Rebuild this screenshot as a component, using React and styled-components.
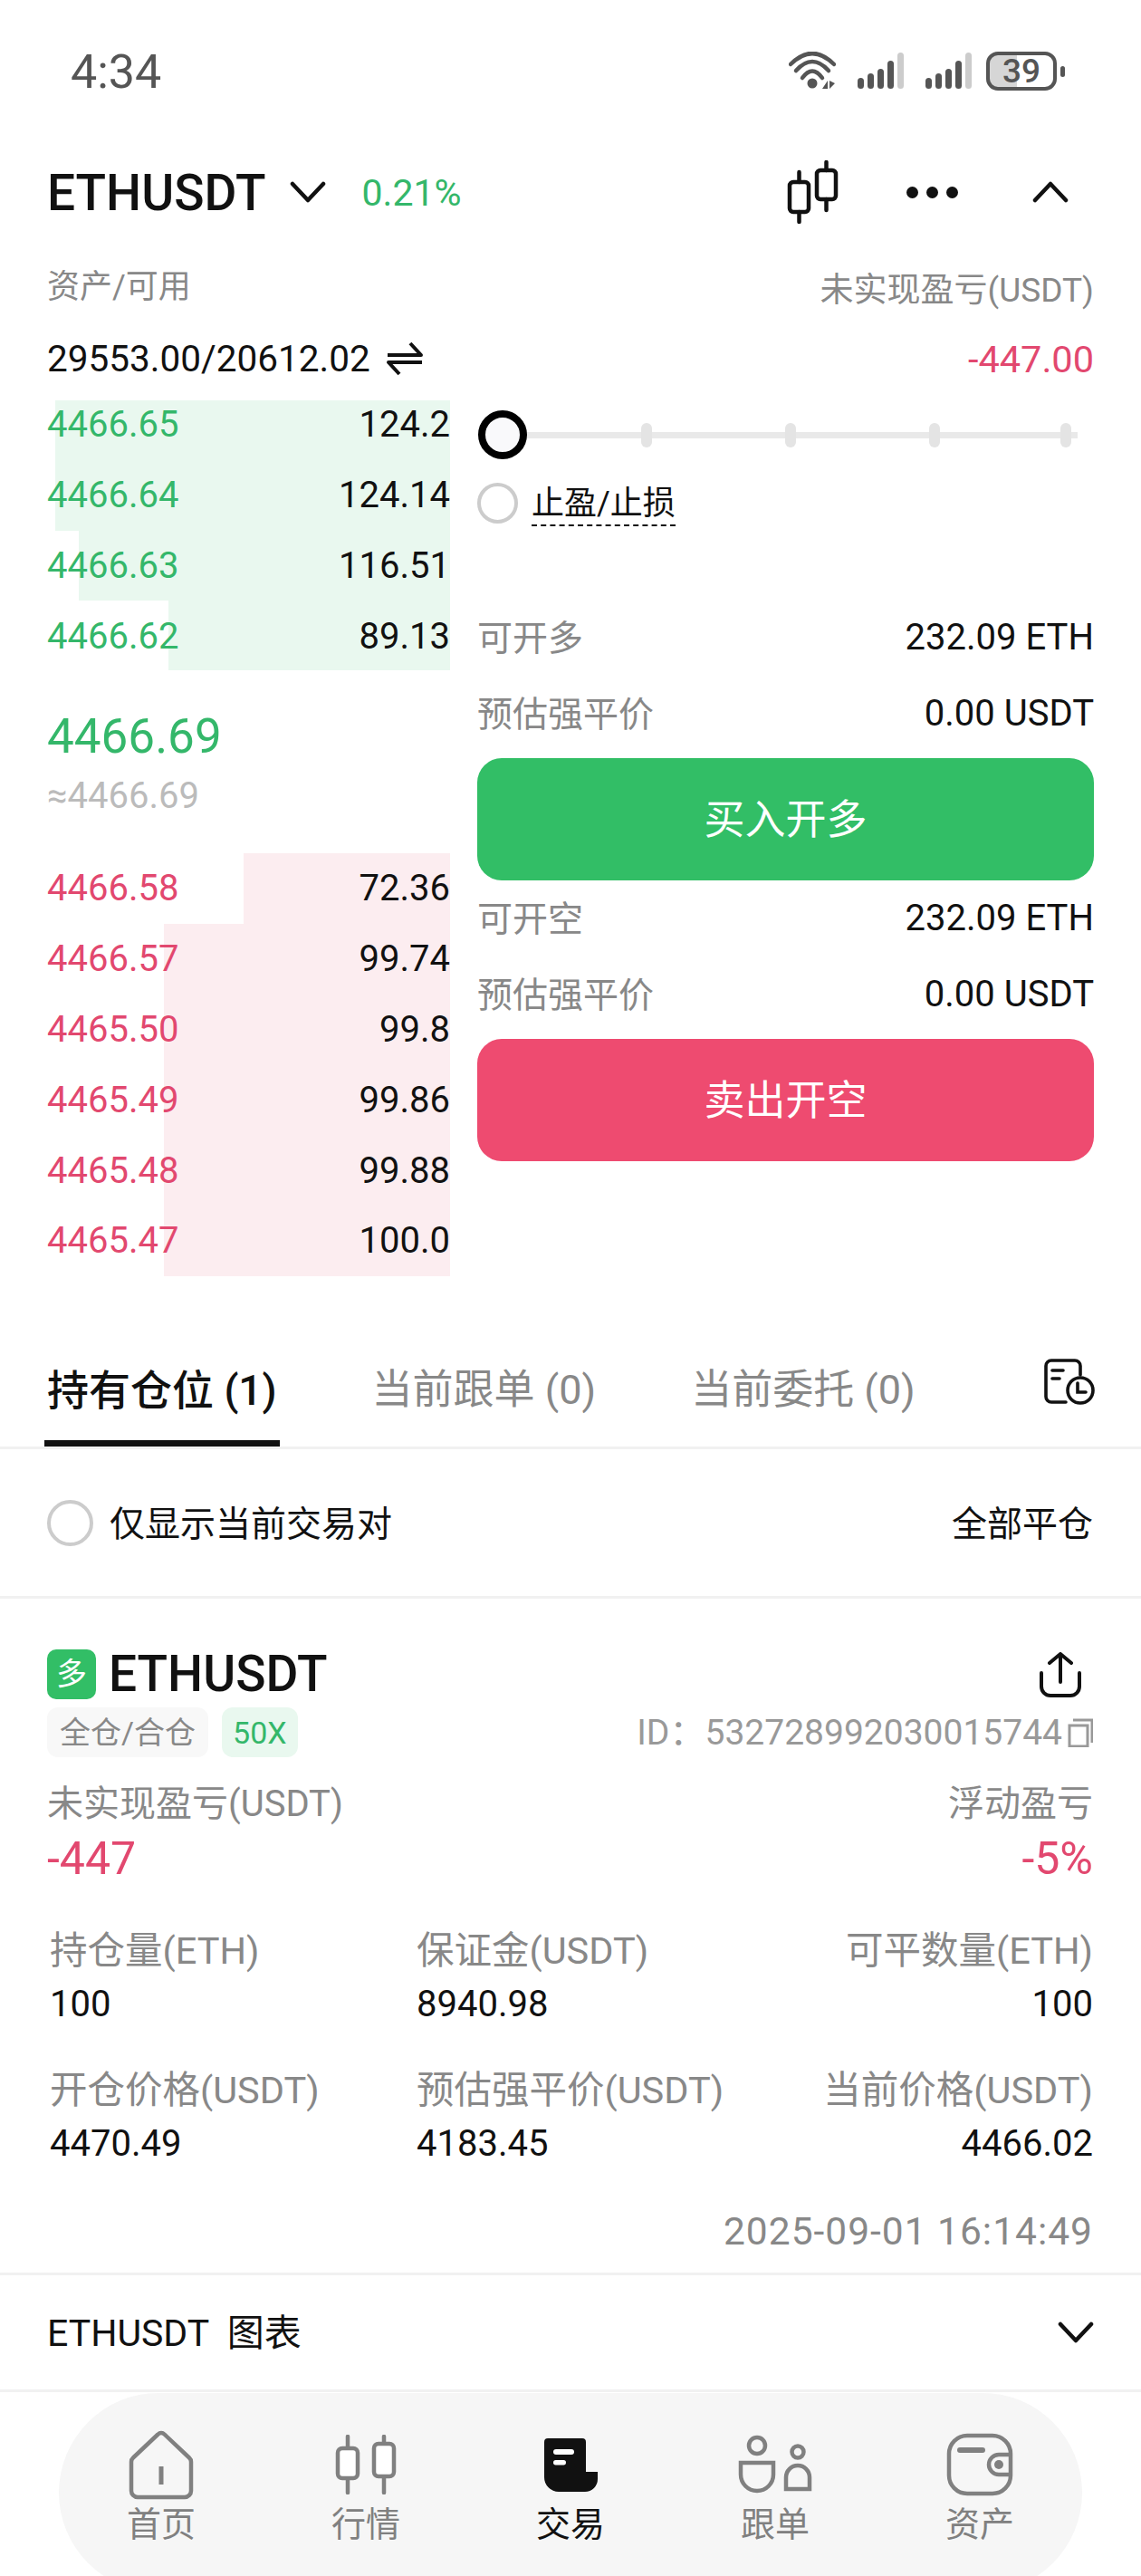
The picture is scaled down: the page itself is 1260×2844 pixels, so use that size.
import styled, { createGlobalStyle } from 'styled-components';

const GREEN = '#34b76a';
const RED = '#e2486f';
const GREY = '#888';
const INK = '#111';
const LINE = '#f1f1f1';
const FONT = `Roboto, "Noto Sans CJK SC", sans-serif`;

const GlobalStyle = createGlobalStyle`
    html, body {
        margin: 0;
        padding: 0;
        background: #fff;
    }
    * {
        box-sizing: border-box;
    }
`;

const Page = styled.div`
    width: 1260px;
    height: 2844px;
    overflow: hidden;
    background: #fff;
    font-family: ${FONT};
    font-size: 40px;
    color: ${INK};
`;

const StatusBar = styled.div`
    height: 156px;
    padding: 0 84px 0 78px;
    display: flex;
    align-items: center;
    justify-content: space-between;
    color: #555;
`;

const Clock = styled.div`
    padding-top: 2px;
    font-size: 52px;
`;

const StatusIcons = styled.div`
    display: flex;
    align-items: center;
    width: 305px;
`;

const Signal = styled.svg`
    margin-left: ${(props) => props.$left}px;
    flex: none;
`;

const Battery = styled.div`
    position: relative;
    margin-left: 16px;
    width: 78px;
    height: 43px;
    border: 4px solid #555;
    border-radius: 13px;
    background: linear-gradient(90deg, #d6d6d6 43%, transparent 43%);
    font-size: 37px;
    font-weight: 500;
    line-height: 35px;
    text-align: center;
    color: #555;

    &::after {
        content: "";
        position: absolute;
        right: -13px;
        top: 12px;
        width: 5px;
        height: 12px;
        border-radius: 3px;
        background: #555;
    }
`;

const Header = styled.div`
    height: 112px;
    padding: 0 52px;
    display: flex;
    align-items: center;
`;

const Pair = styled.div`
    padding-top: 2px;
    font-size: 55px;
    font-weight: 500;
`;

const Percent = styled.div`
    margin-left: 40px;
    padding-top: 2px;
    font-size: 41px;
    color: ${GREEN};
`;

const HeaderTools = styled.div`
    margin-left: auto;
    display: flex;
    align-items: center;
`;

const Dots = styled.div`
    margin-left: 75px;
    display: flex;
    gap: 9px;
    span {
        width: 13px;
        height: 13px;
        border-radius: 50%;
        background: ${INK};
    }
`;

const AssetLabels = styled.div`
    height: 92px;
    margin-top: -1px;
    padding: 0 52px;
    display: flex;
    align-items: center;
    justify-content: space-between;
    font-size: 36px;
    color: ${GREY};
`;

const AssetRight = styled.span`
    padding-top: 8px;
    font-size: 37px;
`;

const AssetValues = styled.div`
    height: 74px;
    margin-bottom: 9px;
    padding: 0 52px;
    display: flex;
    align-items: center;
    justify-content: space-between;
`;

const Balance = styled.div`
    display: flex;
    align-items: center;
    gap: 18px;
    font-size: 40.5px;
`;

const Red = styled.span`
    font-size: 41.5px;
    color: ${RED};
`;

const Trade = styled.div`
    height: 965px;
    padding: 0 52px;
    display: flex;
    gap: 30px;
`;

const BookColumn = styled.div`
    width: 445px;
`;

const BookClip = styled.div`
    height: 298px;
    overflow: hidden;
`;

const BookList = styled.div`
    margin-top: ${(props) => props.$shift || 0}px;
`;

const BookRow = styled.div`
    position: relative;
    height: 77.8px;
    display: flex;
    align-items: center;
    justify-content: space-between;
`;

const BookBar = styled.div`
    position: absolute;
    right: 0;
    top: 0;
    bottom: 0;
    background: ${(props) => (props.$side === 'buy' ? '#e9f8ef' : '#fcedf0')};
`;

const BookPrice = styled.span`
    position: relative;
    color: ${(props) => (props.$side === 'buy' ? GREEN : RED)};
`;

const BookSize = styled.span`
    position: relative;
`;

const PriceBox = styled.div`
    height: 202px;
    padding-top: 37px;
`;

const LastPrice = styled.div`
    font-size: 53px;
    line-height: 72px;
    color: ${GREEN};
`;

const IndexPrice = styled.div`
    line-height: 60px;
    color: #bbb;
`;

const OrderColumn = styled.div`
    width: 681px;
`;

const Slider = styled.div`
    position: relative;
    margin-top: 11px;
    height: 54px;
    display: flex;
    align-items: center;

    &::before {
        content: "";
        position: absolute;
        left: 30px;
        width: 633px;
        top: 24px;
        height: 7px;
        background: #e9e9e9;
    }
`;

const Thumb = styled.div`
    position: relative;
    flex: none;
    width: 54px;
    height: 54px;
    margin-left: 1px;
    margin-right: 126px;
    border: 8px solid #000;
    border-radius: 50%;
    background: #f9f9fb;
`;

const Tick = styled.div`
    position: relative;
    flex: none;
    width: 12px;
    height: 27px;
    margin-right: 147px;
    border-radius: 6px;
    background: #e4e4e4;

    &:last-child {
        margin-left: -14px;
        margin-right: 0;
    }
`;

const StopRow = styled.div`
    margin-top: 25px;
    height: 46px;
    display: flex;
    align-items: center;
    gap: 15px;
`;

const Radio = styled.div`
    width: ${(props) => props.$size}px;
    height: ${(props) => props.$size}px;
    border: 4px solid #ccc;
    border-radius: 50%;
    flex: none;
`;

const StopLabel = styled.span`
    margin-top: 3px;
    font-size: 36px;
    line-height: 46px;
    border-bottom: 2px dashed ${INK};
`;

const InfoRow = styled.div`
    height: 84px;
    display: flex;
    align-items: center;
    justify-content: space-between;
    margin-top: ${(props) => props.$top || 0}px;
`;

const InfoLabel = styled.span`
    margin-bottom: 4px;
    font-size: 39px;
    color: ${GREY};
`;

const ActionButton = styled.button`
    display: block;
    width: 100%;
    height: 135px;
    margin-top: ${(props) => props.$top}px;
    padding: 0 0 6px;
    border: none;
    border-radius: 27px;
    background: ${(props) => (props.$side === 'buy' ? '#32be66' : '#ee4b70')};
    color: #fff;
    font-family: ${FONT};
    font-size: 45px;
`;

const TabsBar = styled.div`
    margin-top: 80px;
    height: 113px;
    padding: 0 49px;
    display: flex;
    gap: 99px;
    border-bottom: 3px solid ${LINE};
`;

const Tab = styled.div`
    height: 110px;
    padding: 22px 3px 0;
    font-size: ${(props) => (props.$active ? 46 : 45)}px;
    line-height: 52px;
    font-weight: ${(props) => (props.$active ? 500 : 400)};
    color: ${(props) => (props.$active ? INK : GREY)};
    border-bottom: 7px solid ${(props) => (props.$active ? INK : 'transparent')};
`;

const TabIcon = styled.svg`
    margin: 13px 0 0 auto;
`;

const FilterRow = styled.div`
    height: 165px;
    padding: 0 53px 0 52px;
    display: flex;
    align-items: center;
    border-bottom: 3px solid ${LINE};
    font-size: 39px;
`;

const FilterLabel = styled.span`
    margin: 0 0 5px 18px;
`;

const CloseAll = styled.span`
    margin: 0 0 5px auto;
`;

const Card = styled.div`
    padding: 56px 53px 20px 52px;
    border-bottom: 3px solid ${LINE};
`;

const CardTitle = styled.div`
    height: 55px;
    display: flex;
    align-items: center;
`;

const SideBadge = styled.div`
    width: 54px;
    height: 55px;
    border-radius: 10px;
    background: #32be66;
    color: #fff;
    font-size: 34px;
    line-height: 55px;
    text-align: center;
`;

const CardPair = styled.div`
    margin-left: 14px;
    font-size: 55px;
    font-weight: 500;
    line-height: 53px;
`;

const ShareIcon = styled.svg`
    margin-left: auto;
    margin-right: 13px;
`;

const TagRow = styled.div`
    margin-top: 9px;
    height: 55px;
    display: flex;
    align-items: center;
    gap: 15px;
`;

const Tag = styled.div`
    height: 55px;
    padding: 2px ${(props) => (props.$green ? 12 : 14)}px 0;
    border-radius: 12px;
    font-size: 34px;
    line-height: 53px;
    background: ${(props) => (props.$green ? '#e9f8ef' : '#f8f8f8')};
    color: ${(props) => (props.$green ? GREEN : GREY)};
`;

const OrderId = styled.div`
    margin-left: auto;
    display: flex;
    align-items: center;
    gap: 6px;
    font-size: 39px;
    line-height: 50px;
    color: #999;
`;

const ProfitRow = styled.div`
    margin-top: 27px;
    display: flex;
    justify-content: space-between;
`;

const ProfitCell = styled.div`
    text-align: ${(props) => props.$align || 'left'};
`;

const CellLabel = styled.div`
    line-height: 50px;
    color: ${GREY};
`;

const ProfitValue = styled.div`
    font-size: 50px;
    line-height: 70px;
    color: ${RED};
`;

const StatGrid = styled.div`
    margin: 42px 0 0 3px;
    display: grid;
    grid-template-columns: 405px 1fr auto;
    row-gap: 36px;
`;

const StatCell = styled.div`
    text-align: ${(props) => props.$align || 'left'};
`;

const StatLabel = styled(CellLabel)`
    font-size: 41.5px;
`;

const StatValue = styled.div`
    line-height: 68px;
`;

const OpenTime = styled.div`
    margin-top: 38px;
    font-size: 42.5px;
    letter-spacing: 1px;
    line-height: 50px;
    text-align: right;
    color: ${GREY};
`;

const ChartRow = styled.div`
    height: 129px;
    padding: 0 52px;
    display: flex;
    align-items: center;
    justify-content: space-between;
    border-bottom: 3px solid ${LINE};
    white-space: pre;
`;

const ChartLabel = styled.span`
    margin-bottom: 7px;
    font-size: 41px;
`;

const BottomNav = styled.div`
    margin: 1px 0 0 65px;
    width: 1130px;
    height: 220px;
    border-radius: 110px;
    background: #f6f6f6;
    display: grid;
    grid-template-columns: repeat(5, 1fr);
`;

const NavItem = styled.div`
    height: 170px;
    padding-top: 39px;
    display: flex;
    flex-direction: column;
    align-items: center;
    font-size: 38px;
    color: ${(props) => (props.$active ? INK : '#808080')};
`;

const NavIcon = styled.div`
    height: 80px;
    display: flex;
    align-items: center;
    justify-content: center;
`;

const NavLabel = styled.div`
    padding-top: 1px;
    line-height: 50px;
`;

const Chevron = ({ up, width = 40, height = 23, color = INK, ...rest }) => (
    <svg width={width} height={height} viewBox={`0 0 ${width} ${height}`} {...rest}>
        <path
            d={up ? `M3 ${height - 3}L${width / 2} 3L${width - 3} ${height - 3}` : `M3 3L${width / 2} ${height - 3}L${width - 3} 3`}
            fill="none"
            stroke={color}
            strokeWidth="4.5"
            strokeLinecap="round"
            strokeLinejoin="round"
        />
    </svg>
);

const WifiIcon = () => (
    <svg width="52" height="42" viewBox="0 0 52 42">
        <g fill="none" stroke="#555" strokeWidth="4.5" strokeLinecap="round">
            <path d="M2 14Q26 -10 50 14" />
            <path d="M8 21Q26 1 44 21" />
            <path d="M15 29Q26 14 37 29" />
        </g>
        <circle cx="26" cy="35" r="5.5" fill="#555" />
        <path d="M43 32V41H37ZM45 32V41L51 35Z" fill="#555" />
    </svg>
);

const SignalIcon = ({ left }) => (
    <Signal $left={left} width="51" height="41" viewBox="0 0 51 41">
        <rect x="0" y="28" width="7" height="12" rx="3.5" fill="#555" />
        <rect x="11" y="23" width="7" height="17" rx="3.5" fill="#555" />
        <rect x="22" y="18" width="7" height="22" rx="3.5" fill="#555" />
        <rect x="33" y="9" width="7" height="31" rx="3.5" fill="#555" />
        <rect x="44" y="0" width="7" height="40" rx="3.5" fill="#ccc" />
    </Signal>
);

const KlineIcon = () => (
    <svg width="58" height="70" viewBox="0 0 58 70">
        <g fill="none" stroke={INK} strokeWidth="4.5" strokeLinecap="round">
            <rect x="4" y="24" width="21" height="33" rx="4" />
            <path d="M14.5 13V24M14.5 57V68" />
            <rect x="34" y="11" width="21" height="32" rx="4" />
            <path d="M44.5 2V11M44.5 43V55" />
        </g>
    </svg>
);

const SwapIcon = () => (
    <svg width="40" height="38" viewBox="0 0 40 38">
        <path d="M1 15H38L26 2M39 23H2L14 36" fill="none" stroke={INK} strokeWidth="4" strokeLinejoin="round" />
    </svg>
);

const HistoryIcon = () => (
    <TabIcon width="58" height="52" viewBox="0 0 58 52">
        <g fill="none" stroke={INK} strokeWidth="3.6" strokeLinecap="round">
            <path d="M40 18V8a6 6 0 0 0 -6 -6H8a6 6 0 0 0 -6 6V42a6 6 0 0 0 6 6H24" />
            <path d="M9 13H21M9 22H17" />
            <circle cx="40" cy="35" r="14" />
            <path d="M37 27V37H46" />
        </g>
    </TabIcon>
);

const UploadIcon = () => (
    <ShareIcon width="46" height="50" viewBox="0 0 46 50">
        <g fill="none" stroke={INK} strokeWidth="4" strokeLinecap="round" strokeLinejoin="round">
            <path d="M23 2V33M11 12L23 2L35 12" />
            <path d="M2 23V38a10 10 0 0 0 10 10H34a10 10 0 0 0 10 -10V23" />
        </g>
    </ShareIcon>
);

const CopyIcon = () => (
    <svg width="28" height="32" viewBox="0 0 28 32">
        <g fill="none" stroke="#999" strokeWidth="3">
            <rect x="2" y="8" width="20" height="23" />
            <path d="M6 2H27V27" />
        </g>
    </svg>
);

const HomeIcon = () => (
    <svg width="76" height="78" viewBox="0 0 76 78">
        <path
            d="M34.5 5.5a5 5 0 0 1 7 0L69 31.500a6 6 0 0 1 2 4.500V68a7 7 0 0 1 -7 7H12a7 7 0 0 1 -7 -7V36a6 6 0 0 1 2 -4.500Z"
            fill="none"
            stroke="currentColor"
            strokeWidth="4.5"
        />
        <path d="M38 41V61" stroke="currentColor" strokeWidth="5" />
    </svg>
);

const MarketIcon = () => (
    <svg width="68" height="66" viewBox="0 0 68 66">
        <g stroke="currentColor" strokeWidth="4.5" strokeLinecap="round">
            <path d="M14 2V64M54 2V64" />
            <rect x="3" y="15" width="22" height="33" rx="5" fill="#fff" />
            <rect x="43" y="10" width="22" height="36" rx="5" fill="#fff" />
        </g>
    </svg>
);

const TradeIcon = () => (
    <svg width="59" height="59" viewBox="0 0 59 59">
        <path
            d="M4 0H42a4 4 0 0 1 4 4V37H59V45a14 14 0 0 1 -14 14H16a16 16 0 0 1 -16 -16V4a4 4 0 0 1 4 -4Z"
            fill="currentColor"
        />
        <rect x="10" y="12" width="23" height="6" rx="3" fill="#fff" />
        <rect x="10" y="24" width="14" height="5.500" rx="2.700" fill="#fff" />
    </svg>
);

const FollowIcon = () => (
    <svg width="84" height="66" viewBox="0 0 84 66">
        <g fill="none" stroke="currentColor" strokeWidth="4.5">
            <circle cx="22" cy="12" r="9" />
            <path d="M4 31H40V44a18 18 0 0 1 -36 0Z" />
            <circle cx="67" cy="19" r="6.500" />
            <path d="M54 60V47a13 13 0 0 1 26 0V60Z" />
        </g>
    </svg>
);

const WalletIcon = () => (
    <svg width="76" height="70" viewBox="0 0 76 70">
        <rect x="4" y="3" width="68" height="64" rx="20" fill="none" stroke="currentColor" strokeWidth="4.5" />
        <path d="M16 19H41" stroke="currentColor" strokeWidth="6" strokeLinecap="round" />
        <path d="M72 24H59a11 11 0 0 0 0 22H72" fill="none" stroke="currentColor" strokeWidth="4.5" />
        <circle cx="59" cy="35" r="5" fill="currentColor" />
    </svg>
);

const bids = [
    { price: '4466.65', size: '124.2', width: 436 },
    { price: '4466.64', size: '124.14', width: 436 },
    { price: '4466.63', size: '116.51', width: 410 },
    { price: '4466.62', size: '89.13', width: 311 },
];

const asks = [
    { price: '4466.58', size: '72.36', width: 228 },
    { price: '4466.57', size: '99.74', width: 316 },
    { price: '4465.50', size: '99.8', width: 316 },
    { price: '4465.49', size: '99.86', width: 316 },
    { price: '4465.48', size: '99.88', width: 316 },
    { price: '4465.47', size: '100.0', width: 316 },
];

const stats = [
    { label: '持仓量(ETH)', value: '100' },
    { label: '保证金(USDT)', value: '8940.98' },
    { label: '可平数量(ETH)', value: '100', align: 'right' },
    { label: '开仓价格(USDT)', value: '4470.49' },
    { label: '预估强平价(USDT)', value: '4183.45' },
    { label: '当前价格(USDT)', value: '4466.02', align: 'right' },
];

const navItems = [
    { label: '首页', Icon: HomeIcon },
    { label: '行情', Icon: MarketIcon },
    { label: '交易', Icon: TradeIcon, active: true },
    { label: '跟单', Icon: FollowIcon },
    { label: '资产', Icon: WalletIcon },
];

const renderRows = (rows, side) =>
    rows.map((row) => (
        <BookRow key={row.price}>
            <BookBar $side={side} style={{ width: row.width }} />
            <BookPrice $side={side}>{row.price}</BookPrice>
            <BookSize>{row.size}</BookSize>
        </BookRow>
    ));

const App = () => {
    return (
        <Page>
            <GlobalStyle />
            <StatusBar>
                <Clock>4:34</Clock>
                <StatusIcons>
                    <WifiIcon />
                    <SignalIcon left={24} />
                    <SignalIcon left={24} />
                    <Battery>39</Battery>
                </StatusIcons>
            </StatusBar>

            <Header>
                <Pair>ETHUSDT</Pair>
                <Chevron width={40} height={24} style={{ marginLeft: 26 }} />
                <Percent>0.21%</Percent>
                <HeaderTools>
                    <KlineIcon />
                    <Dots><span /><span /><span /></Dots>
                    <Chevron up width={40} height={24} style={{ marginLeft: 82, marginRight: 28 }} />
                </HeaderTools>
            </Header>

            <AssetLabels>
                <span>资产/可用</span>
                <AssetRight>未实现盈亏(USDT)</AssetRight>
            </AssetLabels>
            <AssetValues>
                <Balance>29553.00/20612.02 <SwapIcon /></Balance>
                <Red>-447.00</Red>
            </AssetValues>

            <Trade>
                <BookColumn>
                    <BookClip>
                        <BookList $shift={-12}>{renderRows(bids, 'buy')}</BookList>
                    </BookClip>
                    <PriceBox>
                        <LastPrice>4466.69</LastPrice>
                        <IndexPrice>≈4466.69</IndexPrice>
                    </PriceBox>
                    <BookList>{renderRows(asks, 'sell')}</BookList>
                </BookColumn>

                <OrderColumn>
                    <Slider>
                        <Thumb />
                        <Tick /><Tick /><Tick /><Tick />
                    </Slider>
                    <StopRow>
                        <Radio $size={45} />
                        <StopLabel>止盈/止损</StopLabel>
                    </StopRow>
                    <InfoRow $top={83}>
                        <InfoLabel>可开多</InfoLabel>
                        <span>232.09 ETH</span>
                    </InfoRow>
                    <InfoRow>
                        <InfoLabel>预估强平价</InfoLabel>
                        <span>0.00 USDT</span>
                    </InfoRow>
                    <ActionButton $side="buy" $top={8}>买入开多</ActionButton>
                    <InfoRow $top={-1}>
                        <InfoLabel>可开空</InfoLabel>
                        <span>232.09 ETH</span>
                    </InfoRow>
                    <InfoRow>
                        <InfoLabel>预估强平价</InfoLabel>
                        <span>0.00 USDT</span>
                    </InfoRow>
                    <ActionButton $side="sell" $top={8}>卖出开空</ActionButton>
                </OrderColumn>
            </Trade>

            <TabsBar>
                <Tab $active>持有仓位 (1)</Tab>
                <Tab>当前跟单 (0)</Tab>
                <Tab>当前委托 (0)</Tab>
                <HistoryIcon />
            </TabsBar>

            <FilterRow>
                <Radio $size={51} />
                <FilterLabel>仅显示当前交易对</FilterLabel>
                <CloseAll>全部平仓</CloseAll>
            </FilterRow>

            <Card>
                <CardTitle>
                    <SideBadge>多</SideBadge>
                    <CardPair>ETHUSDT</CardPair>
                    <UploadIcon />
                </CardTitle>
                <TagRow>
                    <Tag>全仓/合仓</Tag>
                    <Tag $green>50X</Tag>
                    <OrderId>ID：532728992030015744<CopyIcon /></OrderId>
                </TagRow>
                <ProfitRow>
                    <ProfitCell>
                        <CellLabel>未实现盈亏(USDT)</CellLabel>
                        <ProfitValue>-447</ProfitValue>
                    </ProfitCell>
                    <ProfitCell $align="right">
                        <CellLabel>浮动盈亏</CellLabel>
                        <ProfitValue>-5%</ProfitValue>
                    </ProfitCell>
                </ProfitRow>
                <StatGrid>
                    {stats.map((stat) => (
                        <StatCell key={stat.label} $align={stat.align}>
                            <StatLabel>{stat.label}</StatLabel>
                            <StatValue>{stat.value}</StatValue>
                        </StatCell>
                    ))}
                </StatGrid>
                <OpenTime>2025-09-01 16:14:49</OpenTime>
            </Card>

            <ChartRow>
                <ChartLabel>ETHUSDT  图表</ChartLabel>
                <Chevron width={40} height={24} />
            </ChartRow>

            <BottomNav>
                {navItems.map(({ label, Icon, active }) => (
                    <NavItem key={label} $active={active}>
                        <NavIcon><Icon /></NavIcon>
                        <NavLabel>{label}</NavLabel>
                    </NavItem>
                ))}
            </BottomNav>
        </Page>
    );
};

export default App;
